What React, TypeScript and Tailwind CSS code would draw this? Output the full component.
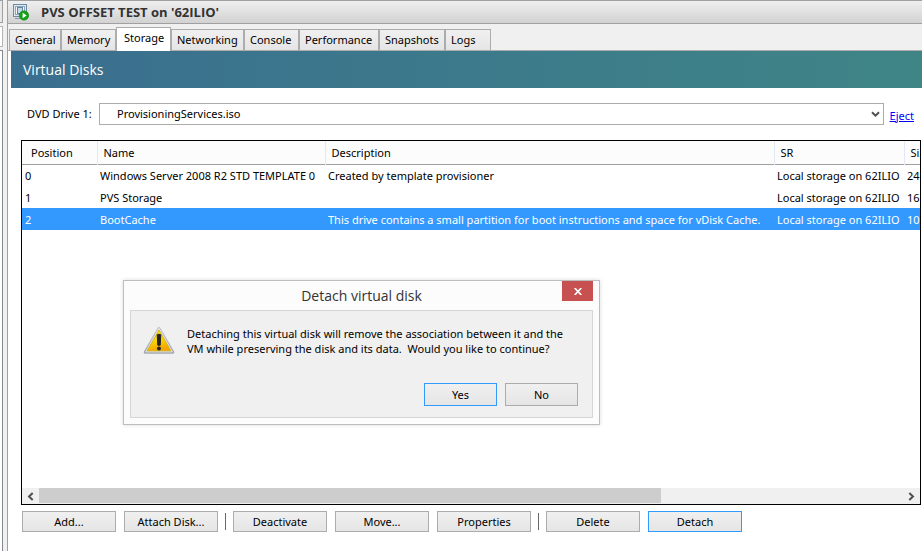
import { useState } from 'react';
import clsx from 'clsx';

const tabs = [
  { label: 'General', width: 'w-[52px]' },
  { label: 'Memory', width: 'w-[55px]' },
  { label: 'Storage', width: 'w-[55px]' },
  { label: 'Networking', width: 'w-[73px]' },
  { label: 'Console', width: 'w-[55px]' },
  { label: 'Performance', width: 'w-[80px]' },
  { label: 'Snapshots', width: 'w-[66px]' },
  { label: 'Logs', width: 'w-[46px]' },
];

const disks = [
  {
    position: 0,
    name: 'Windows Server 2008 R2 STD TEMPLATE 0',
    description: 'Created by template provisioner',
    sr: 'Local storage on 62ILIO',
    size: '24',
  },
  { position: 1, name: 'PVS Storage', description: '', sr: 'Local storage on 62ILIO', size: '16' },
  {
    position: 2,
    name: 'BootCache',
    description: 'This drive contains a small partition for boot instructions and space for vDisk Cache.',
    sr: 'Local storage on 62ILIO',
    size: '10',
  },
];

const actionGroups = [['Add...', 'Attach Disk...'], ['Deactivate', 'Move...', 'Properties'], ['Delete', 'Detach']];

function PushButton({ label, focused, className }: { label: string; focused?: boolean; className: string }) {
  return (
    <button
      type="button"
      className={clsx(
        'border bg-linear-to-b from-[#f0f0f0] to-[#e5e5e5] text-center',
        focused ? 'border-[#3399ff]' : 'border-[#acacac]',
        className,
      )}
    >
      {label}
    </button>
  );
}

function VmIcon() {
  return (
    <svg width="17" height="18" viewBox="0 0 17 18" aria-hidden="true">
      <rect x="0.5" y="1.5" width="13" height="12" fill="#dfe9f1" stroke="#6f8ba2" />
      <rect x="2.5" y="3.5" width="9" height="8" fill="#f4f8fb" stroke="#8ba5ba" />
      <rect x="4.5" y="4.5" width="5" height="6" fill="#c3d7e8" stroke="#6585a0" />
      <path d="M2 15.5h5" stroke="#7f98ac" />
      <circle cx="11" cy="12.5" r="4.6" fill="#16a31a" stroke="#078a0c" strokeWidth="0.8" />
      <path d="M9.6 9.7v5.6l4-2.8z" fill="#fff" />
    </svg>
  );
}

function WarningIcon() {
  return (
    <svg width="32" height="29" viewBox="0 0 32 29" className="shrink-0" aria-hidden="true">
      <defs>
        <linearGradient id="warn-fill" x1="0" y1="0" x2="0.3" y2="1">
          <stop offset="0" stopColor="#fff200" />
          <stop offset="0.5" stopColor="#fbdc0a" />
          <stop offset="1" stopColor="#f3a600" />
        </linearGradient>
        <linearGradient id="warn-edge" x1="0" y1="0" x2="0" y2="1">
          <stop offset="0" stopColor="#c9c9c9" />
          <stop offset="1" stopColor="#a5a9ad" />
        </linearGradient>
      </defs>
      <path d="M16 2.2 29.8 26.3H2.2z" fill="#d5d7d9" stroke="url(#warn-edge)" strokeWidth="3" strokeLinejoin="round" />
      <path d="M16 2.6 29.2 25.8H2.8z" fill="none" stroke="#e6e7e8" strokeWidth="1" strokeLinejoin="round" />
      <path d="M16 4.2 27.8 24.8H4.2z" fill="url(#warn-fill)" stroke="#e0b000" strokeWidth="0.8" strokeLinejoin="round" />
      <path d="M14.2 8.8q1.8-1.2 3.6 0l-.6 10.4h-2.4z" fill="#222" stroke="#222" strokeLinejoin="round" />
      <circle cx="16" cy="22.6" r="2" fill="#222" />
    </svg>
  );
}

function DetachDialog({ onClose }: { onClose: () => void }) {
  return (
    <div
      role="dialog"
      aria-labelledby="detach-title"
      className="absolute top-[139px] left-[101px] flex w-[477px] flex-col border border-[#bdbdbd] bg-[#fcfcfc] px-[6px] pb-[6px] shadow-[0_0_4px_rgba(0,0,0,0.15)]"
    >
      <div className="grid h-[29px] grid-cols-[31px_1fr_31px] items-start">
        <span />
        <h2 id="detach-title" className="pt-[2px] text-center font-['Open_Sans',sans-serif] text-sm leading-[26px] text-[#333]">
          Detach virtual disk
        </h2>
        <button
          type="button"
          aria-label="Close"
          onClick={onClose}
          className="flex h-5 items-center justify-center bg-[#c75050]"
        >
          <svg width="8" height="7" viewBox="0 0 8 7" aria-hidden="true">
            <path d="M0.7 0 7.3 7M7.3 0 0.7 7" stroke="#fff" strokeWidth="1.7" />
          </svg>
        </button>
      </div>
      <div className="border border-[#d5d5d5] bg-[#f0f0f0] pt-[15px] pr-[14px] pb-[11px] pl-3">
        <div className="flex gap-3">
          <WarningIcon />
          <p className="leading-[15px] whitespace-pre">
            {'Detaching this virtual disk will remove the association between it and the\nVM while preserving the disk and its data.  Would you like to continue?'}
          </p>
        </div>
        <div className="mt-[27px] flex justify-end gap-2">
          <PushButton label="Yes" focused className="h-[23px] w-[73px]" />
          <PushButton label="No" className="h-[23px] w-[73px]" />
        </div>
      </div>
    </div>
  );
}

export default function App() {
  const [activeTab, setActiveTab] = useState('Storage');
  const [selectedDisk, setSelectedDisk] = useState(2);
  const [dialogOpen, setDialogOpen] = useState(true);

  return (
    <div className="flex min-h-screen overflow-hidden bg-[#f0f0f0] font-['Noto_Sans','Open_Sans',sans-serif] text-[11px] leading-4 text-black">
      {/* Edge of the navigation pane */}
      <div className="flex w-[7px] shrink-0 flex-col gap-[3px] pr-1">
        <div className="h-[23px] border-t border-r border-b border-[#a0a0a0] bg-[#e8e8e8]" />
        <div className="h-[21px] border-t border-r border-b border-[#b4b4b4] bg-white" />
        <div className="grow border-t border-r border-[#828790] bg-white" />
      </div>

      <main className="flex min-w-0 grow flex-col border-l border-[#a0a0a0]">
        <header className="flex h-6 shrink-0 items-center gap-[11px] border-t border-b border-[#a0a0a0] bg-linear-to-b from-[#efefef] to-[#d2d2d2] pl-[5px]">
          <VmIcon />
          <h1 className="font-['Open_Sans',sans-serif] text-[13px] font-bold text-[#333]">PVS OFFSET TEST on '62ILIO'</h1>
        </header>

        {/* Tabs */}
        <nav className="flex h-[27px] shrink-0 items-end border-b border-[#acacac] pl-px" role="tablist">
          {tabs.map((tab) => (
            <button
              key={tab.label}
              type="button"
              role="tab"
              aria-selected={tab.label === activeTab}
              onClick={() => setActiveTab(tab.label)}
              className={clsx(
                'shrink-0 border-t border-r border-l border-[#acacac] text-left whitespace-nowrap',
                tab.label === activeTab
                  ? '-mb-px h-6 bg-white pb-[4px] pl-[7px]'
                  : 'h-[21px] bg-linear-to-b from-[#f0f0f0] to-[#e5e5e5] pl-[5px]',
                tab.width,
              )}
            >
              {tab.label}
            </button>
          ))}
        </nav>

        <div className="flex grow flex-col bg-white">
          <h2 className="ml-[3px] h-[37px] bg-linear-to-r from-[#3a6e8f] to-[#3f8586] pl-3 font-['Open_Sans',sans-serif] text-sm leading-[37px] text-white">
            Virtual Disks
          </h2>

          <div className="mt-[15px] flex h-[22px] items-center pr-2 pl-[19px]">
            <label htmlFor="dvd" className="w-[72px] shrink-0">
              DVD Drive 1:
            </label>
            <div className="relative h-full grow">
              <select id="dvd" className="h-full w-full appearance-none border border-[#acacac] bg-white pl-[17px]">
                <option>ProvisioningServices.iso</option>
              </select>
              <svg className="pointer-events-none absolute top-2 right-1" width="9" height="7" viewBox="0 0 9 7" aria-hidden="true">
                <path d="M1 1.2 4.5 4.7 8 1.2" fill="none" stroke="#505050" strokeWidth="2" />
              </svg>
            </div>
            <a href="#eject" className="ml-[6px] pt-[3px] text-[#0000ff] underline">
              Eject
            </a>
          </div>

          {/* Disk list */}
          <div className="relative mt-[15px] mr-px ml-[13px] flex h-[365px] flex-col border border-black">
            <div className="grow overflow-hidden">
              <table className="w-[1250px] table-fixed border-collapse text-left whitespace-nowrap">
                <colgroup>
                  <col className="w-[75px]" />
                  <col className="w-[228px]" />
                  <col className="w-[449px]" />
                  <col className="w-[130px]" />
                  <col />
                </colgroup>
                <thead>
                  <tr className="h-[23px] border-b border-[#a0a0a0] bg-[#fcfcfc]">
                    {['Position', 'Name', 'Description', 'SR', 'Size'].map((heading) => (
                      <th key={heading} className="border-r border-[#e3e8f5] p-0 pt-[2px] pl-[6px] font-normal first:pl-[9px]">
                        {heading}
                      </th>
                    ))}
                  </tr>
                </thead>
                <tbody>
                  {disks.map((disk) => (
                    <tr
                      key={disk.position}
                      onClick={() => setSelectedDisk(disk.position)}
                      className={clsx('h-[22px]', disk.position === selectedDisk && 'bg-[#3399ff] text-white')}
                    >
                      <td className="p-0 pt-[2px] pl-[3px]">{disk.position}</td>
                      <td className="p-0 pt-[2px] pl-[3px]">{disk.name}</td>
                      <td className="p-0 pt-[2px] pl-[3px]">{disk.description}</td>
                      <td className="p-0 pt-[2px] pl-[3px]">{disk.sr}</td>
                      <td className="p-0 pt-[2px] pl-[3px]">{disk.size}</td>
                    </tr>
                  ))}
                </tbody>
              </table>
            </div>
            <div className="flex h-4 shrink-0 bg-[#f0f0f0]">
              <button type="button" aria-label="Scroll left" className="flex w-[17px] items-center justify-center">
                <svg width="7" height="9" viewBox="0 0 7 9" aria-hidden="true">
                  <path d="M5.7 1 2 4.5 5.7 8" fill="none" stroke="#505050" strokeWidth="2" />
                </svg>
              </button>
              <div className="grow">
                <div className="h-[15px] w-[72%] bg-[#cdcdcd]" />
              </div>
              <button type="button" aria-label="Scroll right" className="flex w-[17px] items-center justify-center">
                <svg width="7" height="9" viewBox="0 0 7 9" aria-hidden="true">
                  <path d="M1.3 1 5 4.5 1.3 8" fill="none" stroke="#505050" strokeWidth="2" />
                </svg>
              </button>
            </div>
            {dialogOpen && <DetachDialog onClose={() => setDialogOpen(false)} />}
          </div>

          {/* Actions */}
          <div className="mt-[6px] flex gap-[7px] pl-[14px]">
            {actionGroups.map((group, i) => (
              <div key={group[0]} className="flex gap-[7px]">
                {i > 0 && <div className="h-[17px] w-px self-center bg-[#696969]" />}
                <div className="flex gap-2">
                  {group.map((label) => (
                    <PushButton key={label} label={label} focused={label === 'Detach'} className="h-[21px] w-[94px]" />
                  ))}
                </div>
              </div>
            ))}
          </div>
        </div>
      </main>
    </div>
  );
}
